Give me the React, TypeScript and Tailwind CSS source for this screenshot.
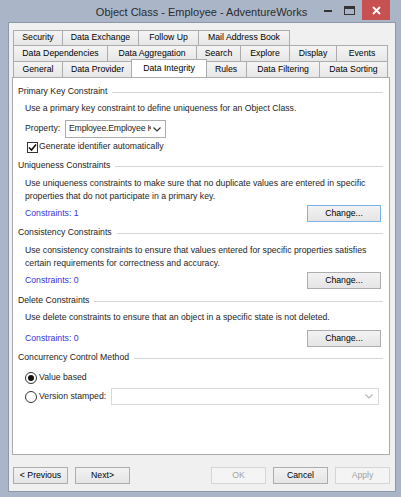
import React from 'react';

const FONT = { fontFamily: '"Liberation Sans", Arial, sans-serif' };

type Tab = { label: string; w: number; active?: boolean };

const rows: Tab[][] = [
  [
    { label: 'Security', w: 50 },
    { label: 'Data Exchange', w: 77 },
    { label: 'Follow Up', w: 61 },
    { label: 'Mail Address Book', w: 92 },
  ],
  [
    { label: 'Data Dependencies', w: 95 },
    { label: 'Data Aggregation', w: 90 },
    { label: 'Search', w: 45 },
    { label: 'Explore', w: 50 },
    { label: 'Display', w: 48 },
    { label: 'Events', w: 52 },
  ],
  [
    { label: 'General', w: 50 },
    { label: 'Data Provider', w: 71 },
    { label: 'Data Integrity', w: 74, active: true },
    { label: 'Rules', w: 42 },
    { label: 'Data Filtering', w: 74 },
    { label: 'Data Sorting', w: 69 },
  ],
];

const TabRow: React.FC<{ tabs: Tab[]; h: string }> = ({ tabs, h }) => (
  <div className={`flex ${h}`}>
    {tabs.map((t, i) =>
      t.active ? (
        <div
          key={t.label}
          style={{ width: t.w + 2 }}
          className="relative z-10 -ml-[2px] -mr-px -mt-[2px] h-[18px] flex items-start pt-[2px] justify-center bg-white border border-b-0 border-[#acacac] text-[8.7px] text-black"
        >
          {t.label}
        </div>
      ) : (
        <div
          key={t.label}
          style={{ width: t.w }}
          className={`${i === 0 ? '' : '-ml-px'} flex items-center justify-center bg-linear-to-b from-[#f4f4f4] to-[#e7e7e7] border border-b-0 border-[#acacac] text-[8.7px] text-black`}
        >
          {t.label}
        </div>
      )
    )}
  </div>
);

const Header: React.FC<{ text: string; mt: string }> = ({ text, mt }) => (
  <div className={`${mt} h-[14px] flex items-center gap-[5px] pl-[5px] pr-[6px]`}>
    <span className="text-[#222] whitespace-nowrap">{text}</span>
    <div className="flex-1 h-px bg-[#d5d5d5]" />
  </div>
);

const Btn: React.FC<{ label: string; disabled?: boolean; focus?: boolean; w?: string }> = ({ label, disabled, focus, w = 'w-[74px]' }) => (
  <div
    className={`${w} h-[17px] flex items-center justify-center text-[8.7px] border ${
      disabled
        ? 'border-[#d5d5d5] bg-[#f4f4f4] text-[#a3a3a3]'
        : focus
        ? 'border-[#7eb4ea] bg-linear-to-b from-[#f2f2f2] to-[#e5e5e5] text-black'
        : 'border-[#adadad] bg-linear-to-b from-[#f2f2f2] to-[#e5e5e5] text-black'
    }`}
  >
    {label}
  </div>
);

const Chevron: React.FC<{ color: string }> = ({ color }) => (
  <svg width="8" height="5" viewBox="0 0 8 5" className="shrink-0">
    <path d="M0.5 0.5 L4 4 L7.5 0.5" fill="none" stroke={color} strokeWidth="1.2" />
  </svg>
);

export default function App() {
  return (
    <div style={FONT} className="w-[401px] h-[497px] bg-[#aab6c7] flex flex-col overflow-hidden">
      {/* Title bar */}
      <div className="h-[22px] flex items-start relative">
        <div className="flex-1 h-[22px] flex items-center justify-center text-[11px] text-[#2b2b2b] pl-[2px] pt-[3px]">
          Object Class - Employee - AdventureWorks
        </div>
        <div className="absolute right-[11px] top-0 flex items-start">
          <div className="w-[16px] h-[20px] flex items-center justify-center">
            <div className="w-[8px] h-[2px] bg-[#333] mt-[2px]" />
          </div>
          <div className="w-[26px] h-[20px] flex items-center justify-center">
            <div className="w-[11px] h-[9px] border border-[#333] border-t-[3px]" />
          </div>
          <div className="w-[28px] h-[20px] bg-[#c75050] flex items-center justify-center">
            <svg width="9" height="9" viewBox="0 0 9 9">
              <path d="M1 1 L8 8 M8 1 L1 8" stroke="#fff" strokeWidth="1.8" />
            </svg>
          </div>
        </div>
      </div>

      {/* Dialog body */}
      <div className="ml-[8px] mr-[5px] h-[470px] bg-[#f0f0f0] border border-[#8d99a9] flex flex-col pl-[3px]">
        <div className="pt-[7px] pl-px flex flex-col">
          <TabRow tabs={rows[0]} h="h-[15px]" />
          <TabRow tabs={rows[1]} h="h-[16px]" />
          <TabRow tabs={rows[2]} h="h-[16px]" />
        </div>

        {/* Panel */}
        <div className="w-[378px] h-[378px] bg-white border border-[#acacac] flex flex-col text-[8.7px] text-[#1e1e1e] whitespace-nowrap">
          <Header text="Primary Key Constraint" mt="mt-[7px]" />
          <div className="mt-[3px] h-[14px] flex items-center pl-[12px]">
            Use a primary key constraint to define uniqueness for an Object Class.
          </div>
          <div className="mt-[4px] h-[18px] flex items-center pl-[12px]">
            <span className="w-[40px]">Property:</span>
            <div className="w-[101px] h-[18px] border border-[#acacac] bg-white flex items-center pl-[3px] pr-[4px] gap-[2px]">
              <span className="flex-1 min-w-0 overflow-hidden tracking-[-0.2px]">Employee.Employee K</span>
              <Chevron color="#333" />
            </div>
          </div>
          <div className="mt-[2px] h-[14px] flex items-center pl-[14px]">
            <div className="w-[11px] h-[11px] border border-[#333] bg-white flex items-center justify-center">
              <svg width="9" height="9" viewBox="0 0 9 9">
                <path d="M1 4.5 L3.5 7 L8 1.5" fill="none" stroke="#111" strokeWidth="1.6" />
              </svg>
            </div>
            <span className="ml-[1px]">Generate identifier automatically</span>
          </div>

          <Header text="Uniqueness Constraints" mt="mt-[5px]" />
          <div className="mt-[4px] pl-[12px] leading-[13px]">
            Use uniqueness constraints to make sure that no duplicate values are entered in specific
            <br />
            properties that do not participate in a primary key.
          </div>
          <div className="mt-[2px] h-[17px] flex items-center justify-between pl-[12px] pr-[8px]">
            <span className="text-[#3535d8]">Constraints: 1</span>
            <Btn label="Change..." focus />
          </div>

          <Header text="Consistency Constraints" mt="mt-[4px]" />
          <div className="mt-[4px] pl-[12px] leading-[13px]">
            Use consistency constraints to ensure that values entered for specific properties satisfies
            <br />
            certain requirements for correctness and accuracy.
          </div>
          <div className="mt-[2px] h-[17px] flex items-center justify-between pl-[12px] pr-[8px]">
            <span className="text-[#3535d8]">Constraints: 0</span>
            <Btn label="Change..." />
          </div>

          <Header text="Delete Constraints" mt="mt-[5px]" />
          <div className="mt-[3px] h-[14px] flex items-center pl-[12px]">
            Use delete constraints to ensure that an object in a specific state is not deleted.
          </div>
          <div className="mt-[5px] h-[17px] flex items-center justify-between pl-[12px] pr-[8px]">
            <span className="text-[#3535d8]">Constraints: 0</span>
            <Btn label="Change..." />
          </div>

          <Header text="Concurrency Control Method" mt="mt-[4px]" />
          <div className="mt-[6px] h-[14px] flex items-center pl-[12px] gap-[2px]">
            <div className="w-[12px] h-[12px] rounded-full border border-[#333] bg-white flex items-center justify-center">
              <div className="w-[6px] h-[6px] rounded-full bg-[#111]" />
            </div>
            <span>Value based</span>
          </div>
          <div className="mt-[3px] h-[17px] flex items-center pl-[12px] pr-[10px]">
            <div className="w-[12px] h-[12px] rounded-full border border-[#333] bg-white" />
            <span className="ml-[2px] w-[72px]">Version stamped:</span>
            <div className="flex-1 h-[17px] border border-[#d9d9d9] bg-white flex items-center justify-end pr-[5px]">
              <Chevron color="#b5b5b5" />
            </div>
          </div>
        </div>

        {/* Bottom buttons */}
        <div className="mt-[12px] flex items-center pl-px">
          <Btn label="< Previous" w="w-[55px]" />
          <div className="ml-[7px]">
            <Btn label="Next>" w="w-[55px]" />
          </div>
          <div className="ml-auto mr-[5px] flex gap-[7px]">
            <Btn label="OK" disabled w="w-[55px]" />
            <Btn label="Cancel" w="w-[55px]" />
            <Btn label="Apply" disabled w="w-[55px]" />
          </div>
        </div>
      </div>
    </div>
  );
}
